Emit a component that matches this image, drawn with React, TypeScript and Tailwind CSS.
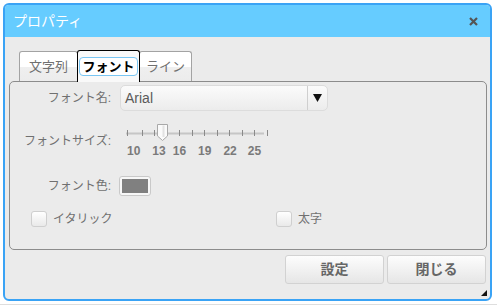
import React from 'react'

const TICKS = [127, 142, 154, 167, 179, 192, 204, 217, 229, 242, 254, 267]

// 目盛り数字の左マージン (見た目合わせ)
const SIZE_LABELS = [
  { v: '10', ml: 'ml-0' },
  { v: '13', ml: 'ml-[12px]' },
  { v: '16', ml: 'ml-[7px]' },
  { v: '19', ml: 'ml-[12px]' },
  { v: '22', ml: 'ml-[12px]' },
  { v: '25', ml: 'ml-[11px]' },
]

const Checkbox = ({ label }: { label: string }) => (
  <label className="flex items-center gap-[6px]">
    <span className="w-[16px] h-[16px] rounded-[3px] border border-[#cfcfcf] bg-gradient-to-b from-white to-[#e9e9e9]" />
    <span className="text-[12px] text-[#707070] leading-none">{label}</span>
  </label>
)

const FontSlider = () => (
  <div className="flex flex-col">
    <svg width="150" height="18" viewBox="0 0 150 18">
      <line x1="6" y1="9.5" x2="144" y2="9.5" stroke="#c6c6c6" strokeWidth="2" />
      {TICKS.map((x) => (
        <line key={x} x1={x - 120 + 0.5} y1="6" x2={x - 120 + 0.5} y2="12" stroke="#8a8a8a" strokeWidth="1" />
      ))}
      <path d="M37.5 0.5 H47.5 V12 L42.5 16.5 L37.5 12 Z" fill="#fafafa" stroke="#a8a8a8" strokeWidth="1" />
      <path d="M43.5 1.5 V13" stroke="#e2e2e2" strokeWidth="2" />
    </svg>
    <div className="flex mt-[2px] pl-[7px] text-[12px] font-bold text-[#7a7a7a] leading-[14px]">
      {SIZE_LABELS.map((s) => (
        <span key={s.v} className={s.ml}>{s.v}</span>
      ))}
    </div>
  </div>
)

export default function App() {
  return (
    <div className="w-[497px] h-[306px] bg-white overflow-hidden pt-[3px] pl-[3px] font-['Liberation_Sans','Noto_Sans_CJK_JP',sans-serif]">
      <div className="relative w-[489px] h-[298px] border-2 border-[#3aa3f5] rounded-[6px] bg-[#ebebeb] overflow-hidden flex flex-col">
        {/* header */}
        <div className="h-[32px] bg-[#66ccff] flex items-center justify-between pl-[8px] pr-[12px]">
          <span className="text-white text-[14px] leading-none">プロパティ</span>
          <svg width="9" height="9" viewBox="0 0 9 9">
            <path d="M1 1 L8 8 M8 1 L1 8" stroke="#555" strokeWidth="2.2" />
          </svg>
        </div>

        {/* tabs */}
        <div className="flex items-end h-[31px] mt-[13px] pl-[14px] relative z-10">
          <div className="w-[59px] h-[30px] border border-b-0 border-[#a3a3a3] rounded-t-[3px] bg-[linear-gradient(#ffffff_0%,#ffffff_50%,#efefef_51%,#ececec_100%)] flex items-center justify-center text-[13px] text-[#707070]">
            文字列
          </div>
          <div className="relative z-10 -ml-px -mb-px w-[63px] h-[32px] border border-b-0 border-black rounded-t-[3px] bg-[#f9f9f9] flex items-start justify-center pt-[6px]">
            <span className="px-[2px] h-[19px] flex items-center border border-[#79c6f3] rounded-[4px] bg-white text-[13px] font-bold text-black leading-none">
              フォント
            </span>
          </div>
          <div className="-ml-px w-[53px] h-[30px] border border-b-0 border-[#a3a3a3] rounded-t-[3px] bg-[linear-gradient(#ffffff_0%,#ffffff_50%,#efefef_51%,#ececec_100%)] flex items-center justify-center text-[13px] text-[#707070]">
            ライン
          </div>
        </div>

        {/* panel */}
        <div className="ml-[4px] w-[478px] h-[169px] border border-[#8c8c8c] rounded-[5px] bg-[#ebebeb] flex flex-col pt-[3px]">
          <div className="flex items-center">
            <span className="w-[101px] text-right text-[12px] text-[#707070]">フォント名:</span>
            <div className="ml-[9px] w-[208px] h-[26px] border border-[#dcdcdc] rounded-[5px] bg-gradient-to-b from-[#fbfbfb] to-[#ececec] flex items-center">
              <span className="flex-1 pl-[4px] text-[14px] text-[#5a5a5a]">Arial</span>
              <div className="w-[20px] h-full border-l border-[#cfcfcf] flex items-center justify-center">
                <svg width="9" height="8" viewBox="0 0 9 8">
                  <path d="M0 0 H9 L4.5 8 Z" fill="#111" />
                </svg>
              </div>
            </div>
          </div>

          <div className="flex items-center mt-[13px]">
            <span className="w-[101px] text-right text-[12px] text-[#707070]">フォントサイズ:</span>
            <div className="ml-[9px]">
              <FontSlider />
            </div>
          </div>

          <div className="flex items-center mt-[18px]">
            <span className="w-[101px] text-right text-[12px] text-[#707070]">フォント色:</span>
            <div className="ml-[8px] w-[32px] h-[20px] border border-[#c9c9c9] rounded-[3px] bg-[#f7f7f7] p-[2px]">
              <div className="w-full h-full bg-[#808080]" />
            </div>
          </div>

          <div className="flex items-center mt-[15px] pl-[21px]">
            <div className="w-[245px]">
              <Checkbox label="イタリック" />
            </div>
            <Checkbox label="太字" />
          </div>
        </div>

        {/* buttons */}
        <div className="flex justify-end gap-[3px] mt-[5px] pr-[4px]">
          <button className="w-[99px] h-[29px] border border-[#d2d2d2] rounded-[3px] bg-gradient-to-b from-[#fdfdfd] to-[#e6e6e6] text-[14px] font-bold text-[#666]">
            設定
          </button>
          <button className="w-[99px] h-[29px] border border-[#d2d2d2] rounded-[3px] bg-gradient-to-b from-[#fdfdfd] to-[#e6e6e6] text-[14px] font-bold text-[#666]">
            閉じる
          </button>
        </div>

        {/* resize grip */}
        <svg className="absolute right-[3px] bottom-[3px]" width="6" height="6" viewBox="0 0 6 6">
          <path d="M6 0 V6 H0 Z" fill="#111" />
        </svg>
      </div>
      <div className="mt-[3px] -ml-[3px] h-px bg-[#dedede]" />
    </div>
  )
}
